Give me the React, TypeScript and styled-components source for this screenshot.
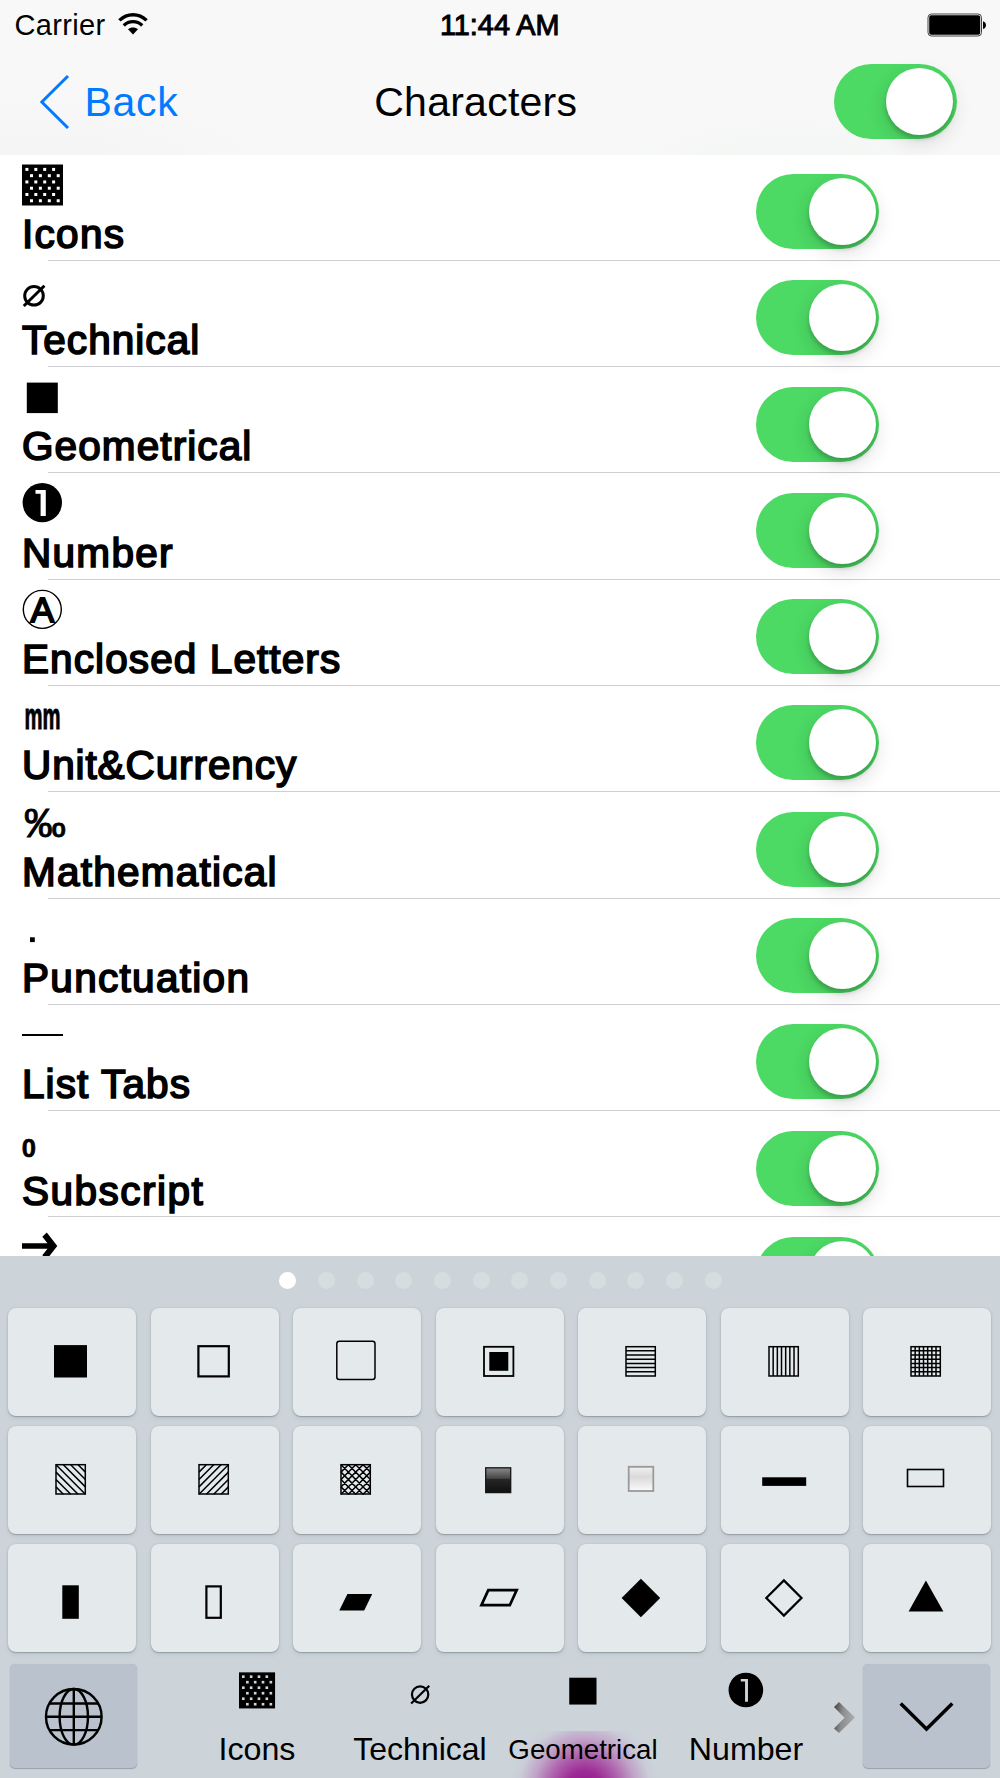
import React from "react";
import styled, { createGlobalStyle } from "styled-components";

const Global = createGlobalStyle`
  * { box-sizing: border-box; }
  body { margin: 0; background: #fff; }
`;

const Screen = styled.div`
  width: 1000px;
  height: 1778px;
  overflow: hidden;
  display: flex;
  flex-direction: column;
  background: #fff;
  color: #000;
  font-family: "Liberation Sans", Arial, Helvetica, sans-serif;
`;

const Header = styled.header`
  flex: none;
  height: 154.5px;
  background:
    radial-gradient(ellipse 200px 60px at 790px 165px, #f3f7f4 0%, rgba(248, 248, 248, 0) 100%),
    radial-gradient(ellipse 240px 70px at 40px 165px, #f4f4f4 0%, rgba(248, 248, 248, 0) 100%),
    #f8f8f8;
`;

const StatusBar = styled.div`
  height: 50px;
  padding: 0 13px 0 14.5px;
  display: grid;
  grid-template-columns: 1fr auto 1fr;
  align-items: center;
`;

const Carrier = styled.div`
  display: flex;
  align-items: center;
  gap: 12px;
  font-size: 29px;
  line-height: 50px;
  letter-spacing: 0.35px;
  svg { margin-bottom: 3px; }
`;

const Clock = styled.div`
  padding-right: 2px;
  font-size: 28.8px;
  line-height: 50px;
  -webkit-text-stroke: 1px #000;
`;

const Battery = styled.div`
  justify-self: end;
  display: flex;
`;

const NavBar = styled.div`
  height: 104px;
  padding: 0 43.5px 0 40px;
  display: grid;
  grid-template-columns: 1fr auto 1fr;
  align-items: center;
`;

const BackButton = styled.button`
  border: 0;
  padding: 0;
  background: none;
  display: flex;
  align-items: center;
  gap: 13.5px;
  color: #007aff;
  font: inherit;
  font-size: 41px;
  line-height: 48px;
  letter-spacing: 0.7px;
`;

const Title = styled.h1`
  margin: 0 45px 0 0;
  font-size: 41px;
  line-height: 48px;
  font-weight: 400;
  letter-spacing: 0.25px;
`;

const Track = styled.div`
  width: 123px;
  height: 75px;
  padding: 4px 3.5px;
  display: flex;
  justify-content: flex-end;
  border-radius: 38px;
  background: #4cd964;
`;

const Knob = styled.div`
  width: 67px;
  height: 67px;
  border-radius: 50%;
  background: #fff;
  box-shadow: 0 7px 20px rgba(0, 0, 0, 0.14), 0 4px 4px rgba(0, 0, 0, 0.18);
`;

const NavToggle = styled.div`
  justify-self: end;
  margin-top: -1px;
`;

const List = styled.main`
  flex: none;
  height: 1101.5px;
  overflow: hidden;
`;

const Row = styled.div`
  height: 106.3px;
  padding: 0 121px 0 22px;
  display: flex;
  justify-content: space-between;
  background: linear-gradient(#cfced2, #cfced2) 48px 100% / 952px 1px no-repeat;
`;

const RowInfo = styled.div`
  display: flex;
  flex-direction: column;
`;

const RowIcon = styled.div`
  height: 55.4px;
  svg { display: block; overflow: visible; }
`;

const RowLabel = styled.div<{ $track: number }>`
  font-size: 40.5px;
  line-height: 48px;
  -webkit-text-stroke: 1.7px #000;
  letter-spacing: ${(p) => p.$track}px;
  white-space: nowrap;
`;

const RowToggle = styled.div`
  padding-top: 19.5px;
`;

const Keyboard = styled.section`
  flex: none;
  height: 522px;
  background: #ccd4da;
`;

const Pager = styled.div`
  height: 52px;
  padding: 0 0 3px 1px;
  display: flex;
  justify-content: center;
  align-items: center;
  gap: 21.65px;
`;

const Dot = styled.i<{ $on: boolean }>`
  width: 17px;
  height: 17px;
  border-radius: 50%;
  background: ${(p) => (p.$on ? "#fff" : "#d5dddf")};
`;

const Keys = styled.div`
  padding-left: 8.4px;
  display: grid;
  grid-template-columns: repeat(7, 128px);
  grid-auto-rows: 107.6px;
  column-gap: 14.52px;
  row-gap: 10.6px;
`;

const Key = styled.button`
  border: 0;
  padding: 0;
  border-radius: 8px;
  background: #e4eaec;
  box-shadow: 0 1px 1px rgba(60, 75, 80, 0.28), 0 0 2px rgba(90, 105, 110, 0.25), 0 3px 4px rgba(90, 105, 110, 0.12);
  svg { display: block; }
`;

const BottomBar = styled.div`
  height: 126.4px;
  padding: 11.6px 10.5px 0 10px;
  display: flex;
`;

const SideKey = styled.button`
  flex: none;
  width: 127px;
  height: 104.5px;
  border: 0;
  padding: 0;
  border-radius: 5px;
  background: #bac2cd;
  box-shadow: 0 1px 1px rgba(60, 70, 85, 0.35), 0 0 1px rgba(90, 105, 120, 0.25);
  svg { display: block; }
`;

const Tabs = styled.nav`
  flex: 1;
  height: 114.8px;
  padding-left: 38.5px;
  display: flex;
`;

const Tab = styled.div<{ $active?: boolean }>`
  flex: none;
  width: 163px;
  display: flex;
  flex-direction: column;
  align-items: center;
  background: ${(p) =>
    p.$active
      ? "radial-gradient(ellipse 76px 75px at 82.5px 58px, #94148c 0%, #9c2a95 24%, rgba(165, 65, 160, 0.8) 44%, rgba(180, 110, 180, 0.47) 67%, rgba(195, 170, 205, 0.18) 86%, rgba(204, 212, 218, 0) 100%) 0 100% / 100% 47px no-repeat"
      : "none"};
`;

const TabIcon = styled.div`
  height: 67.6px;
  svg { display: block; overflow: visible; }
`;

const TabLabel = styled.div<{ $size: number }>`
  height: 36px;
  line-height: 36px;
  display: flex;
  align-items: baseline;
  font-size: ${(p) => p.$size}px;
  white-space: nowrap;
  &::before { content: ""; height: 28px; }
`;

const More = styled.div`
  width: 24px;
  margin: 37px 0 0 5px;
`;

const Toggle = () => (
  <Track role="switch" aria-checked="true">
    <Knob />
  </Track>
);

/* Category glyphs share a 42 x 56 box. */
const dots: [number, number][] = [];
for (let r = 0; r < 6; r++)
  for (let c = 0; c < 4; c++) dots.push([3.4 + (r % 2) * 4.6 + c * 8.9, 12.9 + r * 6.27]);

const Glyph = ({ name, thin, scale = 1 }: { name: string; thin?: boolean; scale?: number }) => (
  <svg width={42 * scale} height={56 * scale} viewBox="0 0 42 56">
    {name === "icons" && (
      <>
        <rect x="0" y="9.5" width="41" height="41" />
        {dots.map(([x, y], i) => (
          <rect key={i} x={x} y={y} width="3" height="3" fill={thin ? "#ccd4da" : "#fff"} />
        ))}
      </>
    )}
    {name === "technical" && (
      <g fill="none" stroke="#000" strokeWidth={thin ? 2.5 : 3} transform={thin ? "translate(8.6 0)" : ""}>
        <circle cx="12" cy="34.8" r="9.3" />
        <path d="M1.8 45 22.4 24.8" />
      </g>
    )}
    {name === "geometrical" && <rect x="4.8" y="15.6" width="31" height="30.5" />}
    {name === "number" && (
      <>
        <circle cx="20.3" cy="29.6" r="19.7" />
        <path
          d={thin ? "M14.5 17h8.2v26h-3.3V20h-4.9z" : "M13.5 17h10.3v26h-5.2V20.8h-5.1z"}
          fill={thin ? "#ccd4da" : "#fff"}
        />
      </>
    )}
    {name === "letters" && (
      <>
        <circle cx="20.3" cy="29.4" r="19" fill="none" stroke="#000" strokeWidth="1.4" />
        <text x="20.3" y="41.6" fontSize="35.5" stroke="#000" strokeWidth="1.8" textAnchor="middle">A</text>
      </>
    )}
    {name === "unit" && (
      <text x="2.6" y="43" fontSize="37.5" fontWeight="700" stroke="#000" strokeWidth="1" textLength="36" lengthAdjust="spacingAndGlyphs">mm</text>
    )}
    {name === "math" && (
      <text x="2" y="45" fontSize="40" stroke="#000" strokeWidth=".8" textLength="42" lengthAdjust="spacingAndGlyphs">‰</text>
    )}
    {name === "punctuation" && <rect x="8" y="38.3" width="4.8" height="4.8" />}
    {name === "tabs" && <rect x="0" y="29" width="41" height="2" />}
    {name === "subscript" && (
      <text x="-0.3" y="45.6" fontSize="25.5" fontWeight="700" stroke="#000" strokeWidth=".6">0</text>
    )}
    {name === "arrow" && <path d="M0 26.2h25.5l-5.2-6.4 4.5-4.2 10.5 13.4L24.8 42.4l-4.5-4.2 5.2-6.4H0z" />}
  </svg>
);

const rows: { name: string; label?: string; track?: number }[] = [
  { name: "icons", label: "Icons", track: 1.3 },
  { name: "technical", label: "Technical", track: 1.05 },
  { name: "geometrical", label: "Geometrical", track: 1.1 },
  { name: "number", label: "Number", track: 1.3 },
  { name: "letters", label: "Enclosed Letters", track: 1.1 },
  { name: "unit", label: "Unit&Currency", track: 0.9 },
  { name: "math", label: "Mathematical", track: 1.25 },
  { name: "punctuation", label: "Punctuation", track: 1.3 },
  { name: "tabs", label: "List Tabs", track: 1.1 },
  { name: "subscript", label: "Subscript", track: 1.5 },
  { name: "arrow" },
];

const tabs = [
  { name: "icons", label: "Icons", size: 32.2 },
  { name: "technical", label: "Technical", size: 32 },
  { name: "geometrical", label: "Geometrical", size: 27.7, active: true },
  { name: "number", label: "Number", size: 32.2 },
];

const steps = [1, 2, 3, 4, 5, 6].map((n) => n * 4.17);
const H = steps.map((s) => `M48 ${38.7 + s}h29.2`).join("");
const V = steps.map((s) => `M${48 + s} 38.7v29.2`).join("");
const diag = (dir: 1 | -1, gap: number) => {
  let d = "";
  for (let k = -Math.floor(29 / gap); k * gap < 29; k++) {
    const o = k * gap;
    const x1 = Math.max(0, o);
    const x2 = Math.min(29.4, 29.4 + o);
    const px = (x: number) => (dir === 1 ? 48 + x : 77.4 - x);
    d += `M${px(x1)} ${38.8 + x1 - o}L${px(x2)} ${38.8 + x2 - o}`;
  }
  return d;
};
const Frame = () => <rect x="48" y="38.7" width="29.3" height="29.3" />;
const line = { fill: "none", stroke: "#000", strokeWidth: 1.5 };

const keys: React.ReactNode[] = [
  <rect x="46" y="37.1" width="33" height="32.4" />,
  <rect x="47.4" y="38.2" width="30.4" height="30.2" fill="none" stroke="#000" strokeWidth="2.2" />,
  <rect x="43.8" y="33.2" width="38.2" height="38.2" rx="2.5" fill="none" stroke="#000" strokeWidth="1.5" />,
  <>
    <rect x="48" y="38.8" width="29.4" height="29.2" fill="none" stroke="#000" strokeWidth="1.8" />
    <rect x="53.3" y="44" width="19" height="18.8" />
  </>,
  <g {...line}><Frame /><path d={H} /></g>,
  <g {...line}><Frame /><path d={V} /></g>,
  <g {...line}><Frame /><path d={H + V} /></g>,
  <g {...line}><Frame /><path d={diag(1, 7.35)} /></g>,
  <g {...line}><Frame /><path d={diag(-1, 7.35)} /></g>,
  <g {...line}><Frame /><path d={diag(1, 7.35) + diag(-1, 7.35)} /></g>,
  <>
    <defs>
      <linearGradient id="gloss" x1="0" y1="0" x2="0" y2="1">
        <stop offset="0" stopColor="#8a8a8a" />
        <stop offset="0.42" stopColor="#484848" />
        <stop offset="0.47" stopColor="#262626" />
        <stop offset="1" stopColor="#101010" />
      </linearGradient>
    </defs>
    <rect x="49.7" y="41.8" width="25" height="24.8" fill="url(#gloss)" stroke="#151515" strokeWidth="1.3" />
  </>,
  <>
    <defs>
      <linearGradient id="pearl" x1="0" y1="0" x2="0" y2="1">
        <stop offset="0" stopColor="#f0f0f0" />
        <stop offset="0.42" stopColor="#dadada" />
        <stop offset="1" stopColor="#fafafa" />
      </linearGradient>
    </defs>
    <rect x="50.7" y="40.8" width="24.6" height="24.2" fill="url(#pearl)" stroke="#999" strokeWidth="1.8" />
  </>,
  <rect x="41.2" y="51.3" width="44" height="8.6" />,
  <rect x="44.5" y="43.5" width="36" height="17" fill="none" stroke="#000" strokeWidth="1.6" />,
  <rect x="54.3" y="41.3" width="16.5" height="33.5" />,
  <rect x="55.4" y="42.4" width="14.4" height="31.4" fill="none" stroke="#000" strokeWidth="2.2" />,
  <path d="M54.4 50H79.2L71.2 66.6H46.3Z" />,
  <path d="M52.3 46.1H80.7L73.8 61.2H45.4Z" fill="none" stroke="#000" strokeWidth="2.7" />,
  <path d="M62.9 34.7 82.2 54 62.9 73.3 43.6 54Z" />,
  <path d="M62.9 36.4 80.5 54 62.9 71.6 45.3 54Z" fill="none" stroke="#000" strokeWidth="2.2" />,
  <path d="M62.9 36.6 80.4 67.4H45.6Z" />,
];

export default function App() {
  return (
    <>
      <Global />
      <Screen>
        <Header>
          <StatusBar>
            <Carrier>
              Carrier
              <svg width="30" height="22" viewBox="0 0 30 22">
                <g fill="none" stroke="#000" strokeWidth="3.4">
                  <path d="M1.4 7.4C9.2-.2 20.8-.2 28.6 7.4" />
                  <path d="M5.8 12.4c5.2-5 13.2-5 18.4 0" />
                </g>
                <path d="M10 16.2c2.8-2.3 7.2-2.3 10 0L15 21.4z" />
              </svg>
            </Carrier>
            <Clock>11:44 AM</Clock>
            <Battery>
              <svg width="60" height="24" viewBox="0 0 60 24">
                <rect x="1" y="1" width="53.5" height="22" rx="3.5" fill="none" stroke="#444" strokeWidth="1" />
                <rect x="2.2" y="2.2" width="51" height="19.6" rx="2" />
                <path d="M56 8.3c4 1.2 4 6.6 0 7.8z" />
              </svg>
            </Battery>
          </StatusBar>
          <NavBar>
            <BackButton>
              <svg width="31" height="56" viewBox="0 0 31 56">
                <path d="M28 2 1.8 28 28 54" fill="none" stroke="#007aff" strokeWidth="3" />
              </svg>
              Back
            </BackButton>
            <Title>Characters</Title>
            <NavToggle><Toggle /></NavToggle>
          </NavBar>
        </Header>

        <List>
          {rows.map((r) => (
            <Row key={r.name}>
              <RowInfo>
                <RowIcon><Glyph name={r.name} /></RowIcon>
                {r.label && <RowLabel $track={r.track ?? 1}>{r.label}</RowLabel>}
              </RowInfo>
              <RowToggle><Toggle /></RowToggle>
            </Row>
          ))}
        </List>

        <Keyboard>
          <Pager>
            {Array.from({ length: 12 }, (_, i) => <Dot key={i} $on={i === 0} />)}
          </Pager>
          <Keys>
            {keys.map((k, i) => (
              <Key key={i}>
                <svg width="128" height="107.6" viewBox="0 0 128 107.6">{k}</svg>
              </Key>
            ))}
          </Keys>
          <BottomBar>
            <SideKey aria-label="Next keyboard">
              <svg width="127" height="104.5" viewBox="0 0 127 104.5">
                <g fill="none" stroke="#000" strokeWidth="2.4">
                  <circle cx="63.8" cy="52.8" r="27.8" />
                  <ellipse cx="63.8" cy="52.8" rx="14.2" ry="27.8" />
                  <path d="M63.8 25v55.6M36 52.8h55.6M39.5 39.5h48.6M39.5 66.1h48.6" />
                </g>
              </svg>
            </SideKey>
            <Tabs>
              {tabs.map((t) => (
                <Tab key={t.name} $active={t.active}>
                  <TabIcon><Glyph name={t.name} thin scale={0.88} /></TabIcon>
                  <TabLabel $size={t.size}>{t.label}</TabLabel>
                </Tab>
              ))}
              <More>
                <svg width="24" height="34" viewBox="0 0 24 34">
                  <defs>
                    <linearGradient id="bevel" x1="0" y1="0" x2="1" y2="0.2">
                      <stop offset="0" stopColor="#3c3c3c" />
                      <stop offset="0.45" stopColor="#8c8c8c" />
                      <stop offset="1" stopColor="#aaa" />
                    </linearGradient>
                  </defs>
                  <path d="M1 6 6 1 22 16.5 6 32 1 27.5 11.5 16.8Z" fill="url(#bevel)" />
                </svg>
              </More>
            </Tabs>
            <SideKey aria-label="Hide keyboard">
              <svg width="127" height="104.5" viewBox="0 0 127 104.5">
                <path d="M37.7 39.5 63.5 65.1 89.3 39.5" fill="none" stroke="#000" strokeWidth="3.5" />
              </svg>
            </SideKey>
          </BottomBar>
        </Keyboard>
      </Screen>
    </>
  );
}
